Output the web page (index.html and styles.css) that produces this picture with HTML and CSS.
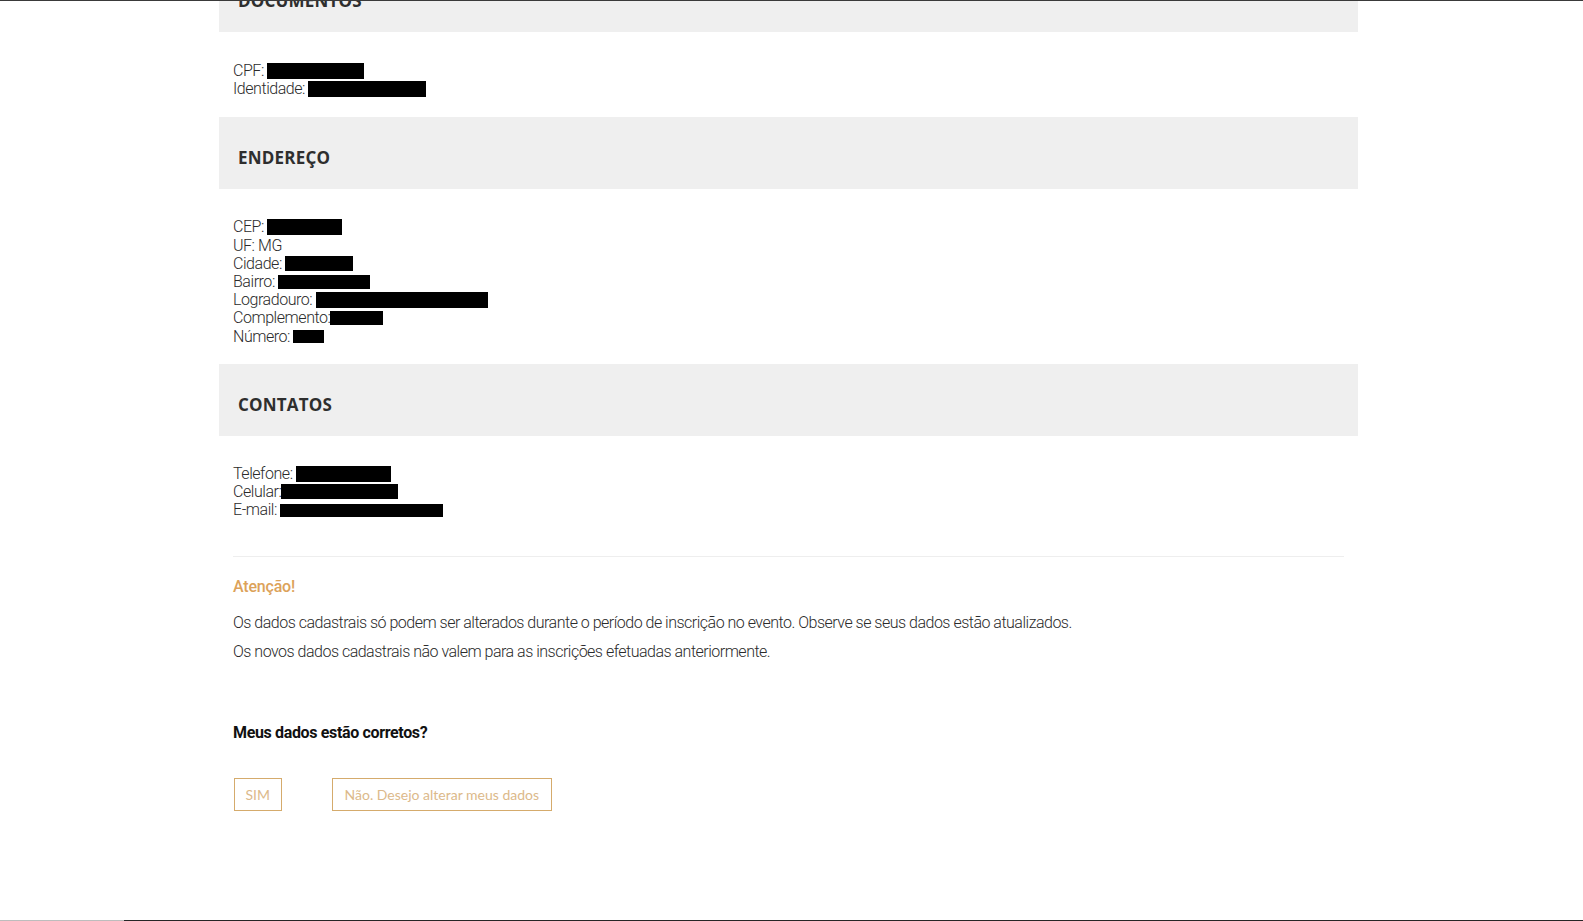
FILE: index.html
```html
<!DOCTYPE html>
<html lang="pt-BR">
<head>
<meta charset="utf-8">
<title>Meus dados</title>
<link rel="stylesheet" href="styles.css">
</head>
<body>
<div class="topline"></div>
<main class="page">
  <section class="block first">
    <h2 class="block-title">DOCUMENTOS</h2>
    <div class="block-body">
      <div class="row">CPF: <span class="redact w-cpf"></span></div>
      <div class="row">Identidade: <span class="redact w-id"></span></div>
    </div>
  </section>
  <section class="block">
    <h2 class="block-title">ENDEREÇO</h2>
    <div class="block-body">
      <div class="row">CEP: <span class="redact w-cep"></span></div>
      <div class="row">UF: MG</div>
      <div class="row">Cidade: <span class="redact w-cidade"></span></div>
      <div class="row">Bairro: <span class="redact w-bairro"></span></div>
      <div class="row">Logradouro: <span class="redact w-logr"></span></div>
      <div class="row">Complemento:<span class="redact w-compl"></span></div>
      <div class="row">Número: <span class="redact w-num"></span></div>
    </div>
  </section>
  <section class="block">
    <h2 class="block-title">CONTATOS</h2>
    <div class="block-body">
      <div class="row">Telefone: <span class="redact w-tel"></span></div>
      <div class="row">Celular:<span class="redact w-cel"></span></div>
      <div class="row">E-mail: <span class="redact w-mail"></span></div>
    </div>
  </section>
  <div class="notice">
    <h3 class="notice-title">Atenção!</h3>
    <p class="notice-text">Os dados cadastrais só podem ser alterados durante o período de inscrição no evento. Observe se seus dados estão atualizados.</p>
    <p class="notice-text">Os novos dados cadastrais não valem para as inscrições efetuadas anteriormente.</p>
  </div>
  <div class="confirm">
    <h3 class="confirm-title">Meus dados estão corretos?</h3>
    <div class="actions">
      <button class="btn btn-yes">SIM</button>
      <button class="btn">Não. Desejo alterar meus dados</button>
    </div>
  </div>
</main>
<div class="bottombar"><span class="bb-light"></span><span class="bb-dark"></span></div>
</body>
</html>
```
FILE: styles.css
```css
html, body {
  margin: 0;
  padding: 0;
  background: #fff;
}
body {
  font-family: "Roboto", "Liberation Sans", sans-serif;
  color: #2b2b2b;
  overflow: hidden;
  height: 921px;
}
.topline {
  position: fixed;
  top: 0;
  left: 0;
  right: 0;
  height: 1px;
  background: #3a3a3a;
  z-index: 5;
}
.page {
  width: 1139px;
  margin-left: 219px;
}
.block.first {
  margin-top: -40px;
}
.block-title {
  margin: 0;
  height: 72px;
  box-sizing: border-box;
  background: #efefef;
  display: flex;
  align-items: center;
  padding: 9px 0 0 19px;
  font-family: "Open Sans", sans-serif;
  font-weight: 700;
  font-size: 17px;
  letter-spacing: 0.2px;
  color: #2e2e2e;
}
.block-body {
  padding: 29px 14px 20px;
}
.block + .block .block-body {
  padding-top: 28px;
  padding-bottom: 19px;
}
.row {
  box-sizing: border-box;
  font-size: 16px;
  line-height: 16.2px;
  height: 18.2px;
  padding-top: 2px;
  font-weight: 300;
  letter-spacing: -0.45px;
  color: #2b2b2b;
  display: flex;
  align-items: center;
  white-space: pre;
}
.redact {
  display: inline-block;
  background: #000;
  height: 16px;
}
.w-cpf { width: 97px; }
.w-id { width: 118px; }
.w-cep { width: 75px; }
.w-cidade { width: 68px; height: 15px; }
.w-bairro { width: 92px; height: 14px; }
.w-logr { width: 172px; }
.w-compl { width: 53px; height: 14px; }
.w-num { width: 31px; height: 13px; }
.w-tel { width: 95px; }
.w-cel { width: 117px; height: 15px; }
.w-mail { width: 163px; height: 13px; }

.notice {
  margin: 19px 14px 0;
  border-top: 1px solid #eeeeee;
  padding-top: 20px;
}
.notice-title {
  margin: 0 0 12px;
  font-size: 16px;
  line-height: 20px;
  font-weight: 500;
  letter-spacing: -0.2px;
  color: #dca25a;
}
.notice-text {
  margin: 0;
  font-size: 16px;
  line-height: 28.3px;
  font-weight: 300;
  letter-spacing: -0.5px;
  color: #2b2b2b;
}
.confirm {
  margin: 56px 14px 0;
}
.confirm-title {
  margin: 0;
  font-size: 16px;
  line-height: 22px;
  font-weight: 700;
  letter-spacing: -0.35px;
  color: #111;
}
.actions {
  display: flex;
  gap: 50px;
  margin-top: 34px;
  padding-left: 1px;
}
.btn {
  height: 33px;
  padding: 0 12px;
  border: 1px solid #d5ab6c;
  background: #fff;
  color: #dcb98a;
  font-family: "Lato", sans-serif;
  font-size: 14px;
  font-weight: 400;
  cursor: pointer;
}
.btn-yes {
  padding: 0 10.5px;
}
.bottombar {
  position: fixed;
  bottom: 0;
  left: 0;
  right: 0;
  height: 1px;
  display: flex;
}
.bb-light { width: 124px; background: #bdbdbd; }
.bb-dark { flex: 1; background: #262626; }
```
